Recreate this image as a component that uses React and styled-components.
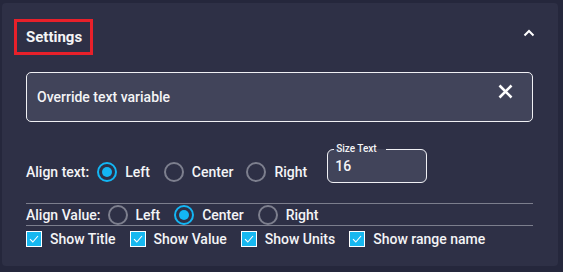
import React from 'react'
import styled, { createGlobalStyle } from 'styled-components'

const Global = createGlobalStyle`
  body {
    margin: 0;
    background: #25273c;
    font-family: Roboto, "Liberation Sans", sans-serif;
    color: #f4f4f6;
  }
`

const Card = styled.div`
  margin: 3px 0 0 2px;
  width: 556px;
  height: 263px;
  box-sizing: border-box;
  background: #2e3046;
  border-radius: 4px;
  padding: 16px 25px 0 12px;
`

const Header = styled.div`
  display: flex;
  align-items: center;
  justify-content: space-between;
  height: 36px;
`

const TitleBox = styled.div`
  box-sizing: border-box;
  width: 79px;
  height: 36px;
  border: 3px solid #e8202a;
  padding-left: 9px;
  display: flex;
  align-items: center;
  font-size: 15px;
  font-weight: 700;
`

const Toggle = styled.div`
  width: 14px;
  height: 14px;
  margin-right: -3px;
  margin-top: -9px;
  display: flex;
  align-items: center;
  justify-content: center;
`

const Body = styled.div`
  padding-left: 12px;
`

const TextInput = styled.div`
  margin-top: 17px;
  box-sizing: border-box;
  height: 50px;
  border: 1px solid #f0f0f4;
  border-radius: 5px;
  background: #41445a;
  display: flex;
  align-items: center;
  justify-content: space-between;
  padding: 0 19px 0 10px;
  font-size: 14px;
  font-weight: 500;
`

const ClearIcon = styled.div`
  width: 15px;
  height: 15px;
  margin-top: -11px;
`

const AlignRow = styled.div`
  margin-top: 26px;
  display: flex;
  align-items: center;
  height: 39px;
`

const RadioGroup = styled.div`
  display: flex;
  align-items: center;
  padding-top: ${p => p.$shift || 0}px;
`

const Label = styled.span`
  font-size: 14px;
  font-weight: 500;
  margin-right: ${p => p.$gap}px;
  white-space: nowrap;
`

const Option = styled.label`
  display: flex;
  align-items: center;
  font-size: 14px;
  font-weight: 500;
  margin-right: ${p => p.$gap}px;
  white-space: nowrap;
`

const RadioCircle = styled.span`
  box-sizing: border-box;
  width: 20px;
  height: 20px;
  border-radius: 50%;
  border: 2px solid ${p => (p.$on ? '#13b6f4' : '#7d7f8e')};
  display: flex;
  align-items: center;
  justify-content: center;
  margin-right: ${p => p.$gap}px;
  &::after {
    content: '';
    width: 10px;
    height: 10px;
    border-radius: 50%;
    background: ${p => (p.$on ? '#13b6f4' : 'transparent')};
  }
`

const SizeField = styled.fieldset`
  box-sizing: border-box;
  margin: 0 0 0 20px;
  width: 100px;
  height: 39px;
  border: 1.5px solid #f0f0f4;
  border-radius: 6px;
  background: #41445a;
  padding: 0 6px;
  position: relative;
  top: -4px;
`

const SizeLegend = styled.legend`
  font-size: 10px;
  font-weight: 500;
  padding: 0 9px 0 2px;
  line-height: 10px;
`

const SizeValue = styled.div`
  font-size: 14px;
  font-weight: 500;
  padding-left: 1px;
  margin-top: 4px;
`

const Divider = styled.div`
  height: 1px;
  background: #7c7e8d;
  margin-top: ${p => p.$top || 0}px;
`

const ValueRow = styled.div`
  display: flex;
  align-items: center;
  height: 21px;
`

const CheckRow = styled.div`
  display: flex;
  align-items: center;
  margin-top: 4px;
  height: 17px;
`

const CheckBox = styled.span`
  box-sizing: border-box;
  width: 16px;
  height: 16px;
  border: 1px solid #ffffff;
  background: #17b8f0;
  display: flex;
  align-items: center;
  justify-content: center;
  margin-right: 8px;
`

const Radio = ({ on, label, gap, inner = 8 }) => (
  <Option $gap={gap}>
    <RadioCircle $on={on} $gap={inner} />
    {label}
  </Option>
)

const Check = ({ label, gap }) => (
  <Option $gap={gap}>
    <CheckBox>
      <svg width="10" height="8" viewBox="0 0 10 8">
        <path d="M1 4.2 L3.8 7 L9 1" fill="none" stroke="#fff" strokeWidth="1.1" />
      </svg>
    </CheckBox>
    {label}
  </Option>
)

export default function App() {
  return (
    <>
      <Global />
      <Card>
        <Header>
          <TitleBox>Settings</TitleBox>
          <Toggle>
            <svg width="12" height="8" viewBox="0 0 12 8">
              <path d="M1.5 6.5 L6 2 L10.5 6.5" fill="none" stroke="#fff" strokeWidth="2" />
            </svg>
          </Toggle>
        </Header>
        <Body>
          <TextInput>
            Override text variable
            <ClearIcon>
              <svg width="15" height="15" viewBox="0 0 15 15">
                <path d="M1.5 1.5 L13.5 13.5 M13.5 1.5 L1.5 13.5" stroke="#fff" strokeWidth="2.6" />
              </svg>
            </ClearIcon>
          </TextInput>
          <AlignRow>
            <RadioGroup $shift={9}>
              <Label $gap={8}>Align text:</Label>
              <Radio on label="Left" gap={14} />
              <Radio label="Center" gap={13} />
              <Radio label="Right" gap={0} />
            </RadioGroup>
            <SizeField>
              <SizeLegend>Size Text</SizeLegend>
              <SizeValue>16</SizeValue>
            </SizeField>
          </AlignRow>
          <Divider $top={16} />
          <ValueRow>
            <Label $gap={8}>Align Value:</Label>
            <Radio label="Left" gap={14} inner={7} />
            <Radio on label="Center" gap={14} inner={8} />
            <Radio label="Right" gap={0} inner={8} />
          </ValueRow>
          <Divider />
          <CheckRow>
            <Check label="Show Title" gap={14} />
            <Check label="Show Value" gap={14} />
            <Check label="Show Units" gap={14} />
            <Check label="Show range name" gap={0} />
          </CheckRow>
        </Body>
      </Card>
    </>
  )
}
